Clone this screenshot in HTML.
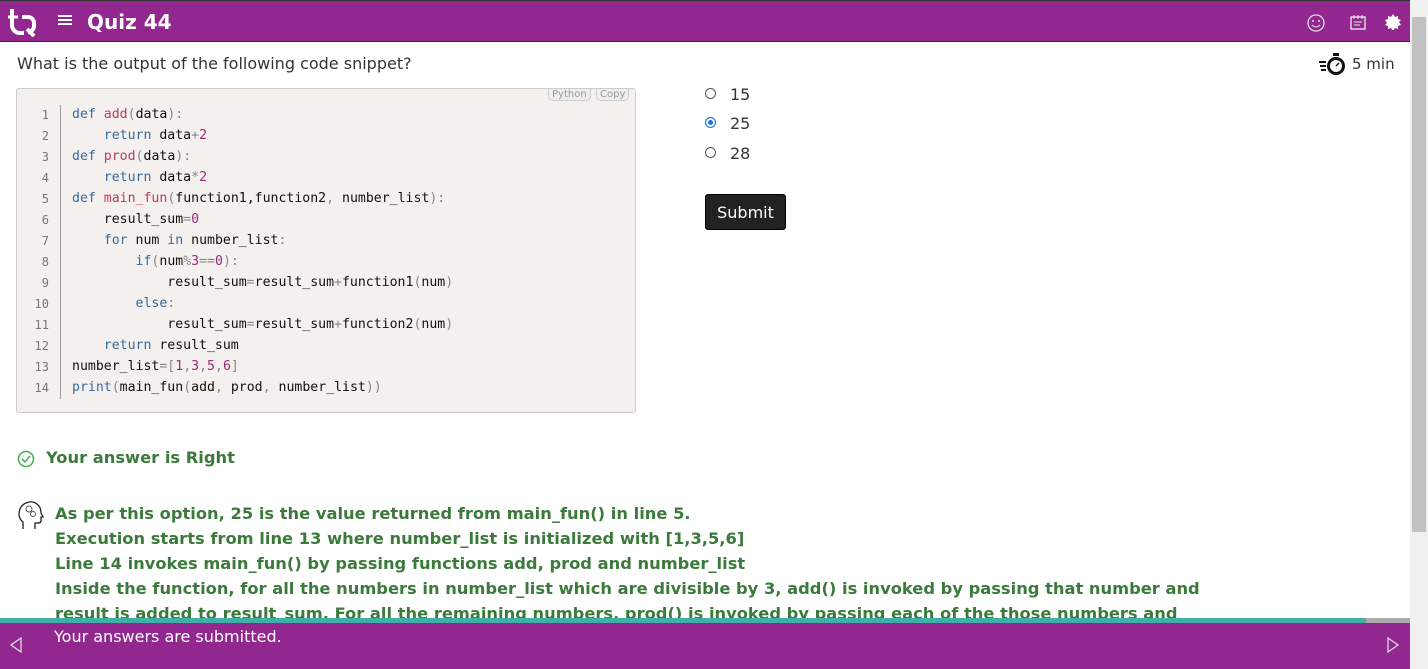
<!DOCTYPE html>
<html><head><style>
body{margin:0;width:1428px;height:669px;overflow:hidden;font-family:"DejaVu Sans",Verdana,sans-serif;background:#fff;position:relative}
.top{position:absolute;left:0;top:0;width:1410px;height:42px;background:#92278f;border-top:1px solid #333;border-bottom:1px solid #333;box-sizing:border-box}
.sb{position:absolute;right:0;top:0;width:18px;height:669px;background:#f0f0f0}
.sb .th{position:absolute;left:2px;top:17px;width:14px;height:515px;background:#c1c1c1}
.q{position:absolute;left:17px;top:54px;font-size:16px;color:#333}
.code{position:absolute;left:16px;top:88px;width:618px;height:323px;background:#f4f0ed;border:1px solid #ccc;border-radius:3px}
.code pre{margin:0;position:absolute;left:0;top:15px;font-family:"DejaVu Sans Mono","Liberation Mono",monospace;font-size:13.2px;line-height:21px;color:#111}
.ln{position:absolute;left:0;top:16px;width:43px;border-right:1px solid #999;text-align:right}
.ln div{font-family:"DejaVu Sans Mono",monospace;font-size:12px;line-height:21px;color:#777;padding-right:11px}
.k{color:#3a6b9e}.f{color:#c1395c}.n{color:#9a2a7a}.p{color:#888}
.tag{position:absolute;top:0;font-size:10px;color:#999;border:1px solid #ccc;border-top:none;border-radius:0 0 5px 5px;padding:0 3px;background:#eee}
.opt{position:absolute;left:705px;font-size:16px;color:#333}
.opt i{display:inline-block;width:9px;height:9px;border:1px solid #555;border-radius:50%;vertical-align:1px;margin-right:14px}
.btn{position:absolute;left:705px;top:194px;width:81px;height:36px;background:#222;border:1px solid #000;border-radius:3px;color:#fff;font-size:16px;text-align:center;line-height:36px;box-sizing:border-box}
.g{color:#3b7a3b;font-weight:bold;font-size:16.3px}
.bot{position:absolute;left:0;top:623px;width:1410px;height:46px;background:#92278f;color:#fff}
</style></head><body>
<div class="top">
<svg style="position:absolute;left:7px;top:6px" width="30" height="30" viewBox="0 0 30 30"><path d="M5 2v16a8 8 0 0 0 8 8h4" stroke="#fff" stroke-width="4" fill="none"/><path d="M1 10h10" stroke="#fff" stroke-width="3"/><path d="M15 10h6a6 6 0 0 1 6 6v3a6 6 0 0 1-6 6" stroke="#fff" stroke-width="4" fill="none"/><path d="M20 22l7 7" stroke="#fff" stroke-width="4"/></svg>
<div style="position:absolute;left:58px;top:14px;width:14px;height:2px;background:#fff;box-shadow:0 4px #fff,0 8px #fff"></div>
<div style="position:absolute;left:87px;top:9px;color:#fff;font-size:20px;font-weight:bold">Quiz 44</div>
<svg style="position:absolute;left:1307px;top:13px" width="18" height="18"><circle cx="9" cy="9" r="8" stroke="#ddd" fill="none" stroke-width="1.3"/><circle cx="6" cy="7" r="1" fill="#ddd"/><circle cx="12" cy="7" r="1" fill="#ddd"/><path d="M5 11q4 4 8 0" stroke="#ddd" fill="none"/></svg>
<svg style="position:absolute;left:1350px;top:13px" width="16" height="16"><rect x="1" y="3" width="14" height="12" stroke="#eee" fill="none" stroke-width="1.3"/><path d="M4 1v4M8 1v4M12 1v4M4 8h8M4 11h6" stroke="#eee"/></svg>
<svg style="position:absolute;left:1385px;top:13px" width="16" height="16"><path d="M8 0l2 3 3-1 0 3 3 1-2 2 2 3-3 1 0 3-3-1-2 3-2-3-3 1 0-3-3-1 2-2-2-3 3-1 0-3 3 1z" fill="#fff"/></svg>
</div>
<div class="sb"><div class="th"></div></div>
<div class="q">What is the output of the following code snippet?</div>
<svg style="position:absolute;left:1318px;top:51px" width="30" height="26"><path d="M1 11h7M2 15h6M3 19h5" stroke="#111" stroke-width="2"/><circle cx="18" cy="15" r="9" fill="#111"/><circle cx="18" cy="15" r="6" fill="#fff"/><rect x="15" y="2" width="6" height="3" fill="#111"/><path d="M18 15l3-3" stroke="#111" stroke-width="1.5"/></svg>
<div style="position:absolute;left:1352px;top:55px;font-size:15px;color:#333">5 min</div>
<div class="code">
<span class="tag" style="left:531px">Python</span><span class="tag" style="left:579px">Copy</span>
<div class="ln"><div>1</div><div>2</div><div>3</div><div>4</div><div>5</div><div>6</div><div>7</div><div>8</div><div>9</div><div>10</div><div>11</div><div>12</div><div>13</div><div>14</div></div>
<pre style="left:55px"><span class="k">def</span> <span class="f">add</span><span class="p">(</span>data<span class="p">):</span>
    <span class="k">return</span> data<span class="p">+</span><span class="n">2</span>
<span class="k">def</span> <span class="f">prod</span><span class="p">(</span>data<span class="p">):</span>
    <span class="k">return</span> data<span class="p">*</span><span class="n">2</span>
<span class="k">def</span> <span class="f">main_fun</span><span class="p">(</span>function1,function2<span class="p">,</span> number_list<span class="p">):</span>
    result_sum<span class="p">=</span><span class="n">0</span>
    <span class="k">for</span> num <span class="k">in</span> number_list<span class="p">:</span>
        <span class="k">if</span><span class="p">(</span>num<span class="p">%</span><span class="n">3</span><span class="p">==</span><span class="n">0</span><span class="p">):</span>
            result_sum<span class="p">=</span>result_sum<span class="p">+</span>function1<span class="p">(</span>num<span class="p">)</span>
        <span class="k">else</span><span class="p">:</span>
            result_sum<span class="p">=</span>result_sum<span class="p">+</span>function2<span class="p">(</span>num<span class="p">)</span>
    <span class="k">return</span> result_sum
number_list<span class="p">=[</span><span class="n">1</span><span class="p">,</span><span class="n">3</span><span class="p">,</span><span class="n">5</span><span class="p">,</span><span class="n">6</span><span class="p">]</span>
<span class="k">print</span><span class="p">(</span>main_fun<span class="p">(</span>add<span class="p">,</span> prod<span class="p">,</span> number_list<span class="p">))</span></pre>
</div>
<div class="opt" style="top:85px"><i></i>15</div>
<div class="opt" style="top:114px"><i style="background:#1a73e8;border-color:#1a73e8;box-shadow:inset 0 0 0 2px #fff"></i>25</div>
<div class="opt" style="top:144px"><i></i>28</div>
<div class="btn">Submit</div>
<svg style="position:absolute;left:17px;top:450px" width="18" height="18"><circle cx="9" cy="9" r="7.5" stroke="#4caf50" stroke-width="1.6" fill="none"/><path d="M5 9l3 3 5-6" stroke="#4caf50" stroke-width="1.6" fill="none"/></svg>
<div class="g" style="position:absolute;left:46px;top:448px">Your answer is Right</div>
<svg style="position:absolute;left:18px;top:498px" width="26" height="32"><path d="M5 31v-7c-4-3-5-8-3-13 3-7 12-9 17-5 4 3 4 7 4 9l2 4h-2v4c0 2-2 2-4 2h-2v6" stroke="#222" stroke-width="1.3" fill="none"/><circle cx="11" cy="11" r="3" stroke="#555" fill="none"/><circle cx="15" cy="16" r="2.5" stroke="#555" fill="none"/></svg>
<div class="g" style="position:absolute;left:55px;top:501px;line-height:25px;width:1200px;height:117px;overflow:hidden">As per this option, 25 is the value returned from main_fun() in line 5.<br>Execution starts from line 13 where number_list is initialized with [1,3,5,6]<br>Line 14 invokes main_fun() by passing functions add, prod and number_list<br>Inside the function, for all the numbers in number_list which are divisible by 3, add() is invoked by passing that number and<br>result is added to result_sum. For all the remaining numbers, prod() is invoked by passing each of the those numbers and</div>
<div style="position:absolute;left:0;top:618px;width:1366px;height:5px;background:#3fb0a8"></div>
<div style="position:absolute;left:1366px;top:618px;width:44px;height:5px;background:#aaa"></div>
<div class="bot">
<svg style="position:absolute;left:9px;top:14px" width="14" height="16"><path d="M12 1L2 8l10 7z" stroke="#ddd" fill="none" stroke-width="1.3"/></svg>
<div style="position:absolute;left:54px;top:4px;font-size:16px">Your answers are submitted.</div>
<svg style="position:absolute;left:1386px;top:14px" width="14" height="16"><path d="M2 1l10 7-10 7z" stroke="#ddd" fill="none" stroke-width="1.3"/></svg>
</div>
</body></html>
